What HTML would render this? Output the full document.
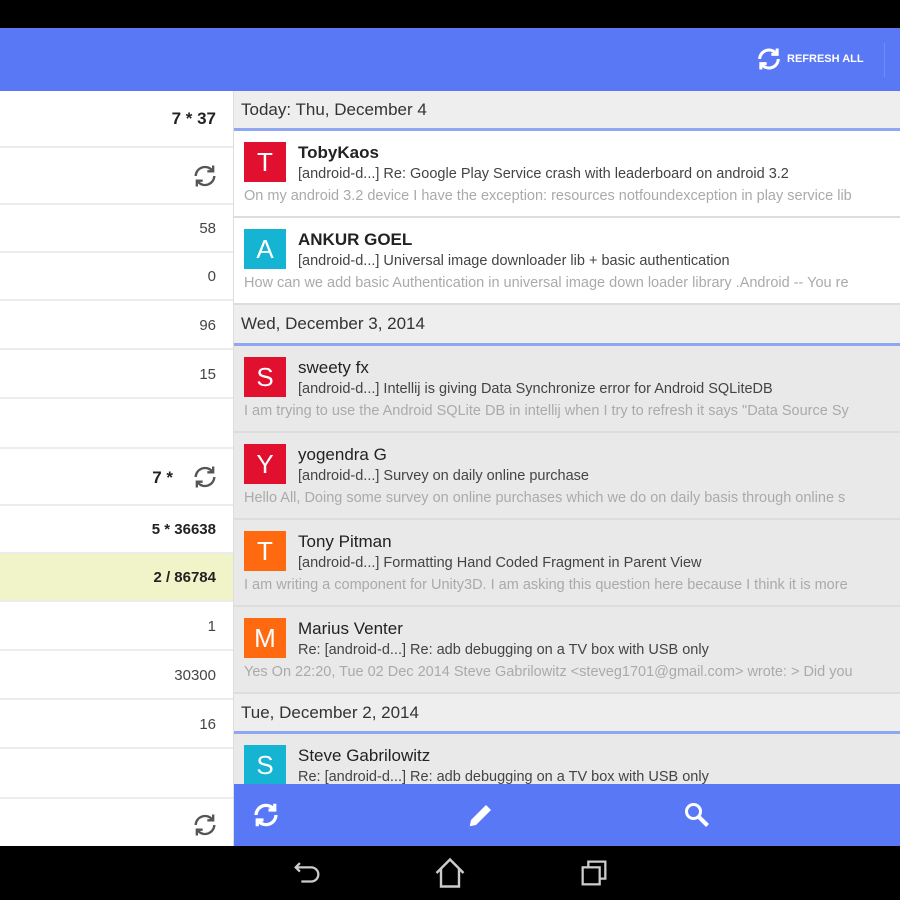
<!DOCTYPE html><html><head><style>
body{margin:0;width:900px;height:900px;overflow:hidden;background:#000;font-family:"Liberation Sans",sans-serif;position:relative}
.a{position:absolute}
.top{left:0;top:28px;width:900px;height:63px;background:#5878f5}
.left{left:0;top:91px;width:234px;height:755px;background:#fff;border-right:1px solid #ddd;box-sizing:border-box}
.lr{position:absolute;left:0;width:233px;border-bottom:2px solid #ececec;text-align:right;box-sizing:border-box;padding-right:17px;font-size:15px;color:#444}
.right{left:234px;top:91px;width:666px;height:693px;background:#e9e9e9;overflow:hidden}
.hd{position:absolute;left:0;width:666px;background:#eee;border-bottom:3px solid #8fa7f2;box-sizing:border-box;font-size:17px;color:#333;padding-left:7px}
.it{position:absolute;left:0;width:666px;border-bottom:2px solid #ddd;box-sizing:border-box;white-space:nowrap}
.av{position:absolute;left:10px;top:11px;width:42px;height:40px;color:#fff;font-size:26px;text-align:center;line-height:40px}
.n{position:absolute;left:64px;top:12px;font-size:17px;color:#222}
.s{position:absolute;left:64px;top:35px;font-size:14.5px;color:#444}
.p{position:absolute;left:10px;top:57px;font-size:14.5px;color:#aaa}
.bot{left:234px;top:784px;width:666px;height:62px;background:#5878f5}
</style></head><body>
<div class="a top">
<svg class="a" style="left:755px;top:17px" width="28" height="28" viewBox="0 0 24 24" fill="none" stroke="#fff" stroke-width="2.6"><path d="M4 12a8 8 0 0 1 14-5"/><path d="M19 3v5h-5"/><path d="M20 12a8 8 0 0 1-14 5"/><path d="M5 21v-5h5"/></svg>
<div class="a" style="left:787px;top:25px;color:#fff;font-size:11px;font-weight:bold">REFRESH ALL</div>
<div class="a" style="left:884px;top:15px;width:1px;height:34px;background:#6e8cf6"></div>
</div>
<div class="a left">
<div class="lr" style="top:0;height:57px;line-height:56px;font-weight:bold;color:#222;font-size:17px">7 * 37</div>
<div class="lr" style="top:57px;height:57px"></div>
<div class="lr" style="top:114px;height:48px;line-height:48px">58</div>
<div class="lr" style="top:162px;height:48px;line-height:48px">0</div>
<div class="lr" style="top:210px;height:49px;line-height:49px">96</div>
<div class="lr" style="top:259px;height:49px;line-height:49px">15</div>
<div class="lr" style="top:308px;height:50px"></div>
<div class="lr" style="top:358px;height:57px;line-height:57px;font-weight:bold;color:#222;font-size:17px;padding-right:60px">7 *</div>
<div class="lr" style="top:415px;height:48px;line-height:48px;font-weight:bold;color:#222">5 * 36638</div>
<div class="lr" style="top:463px;height:48px;line-height:48px;font-weight:bold;color:#222;background:#f1f4c9">2 / 86784</div>
<div class="lr" style="top:511px;height:49px;line-height:49px">1</div>
<div class="lr" style="top:560px;height:49px;line-height:49px">30300</div>
<div class="lr" style="top:609px;height:49px;line-height:49px">16</div>
<div class="lr" style="top:658px;height:50px"></div>
<svg class="a" style="left:191px;top:71px" width="28" height="28" viewBox="0 0 24 24" fill="none" stroke="#555" stroke-width="2"><path d="M4 12a8 8 0 0 1 14-5"/><path d="M19 3v5h-5"/><path d="M20 12a8 8 0 0 1-14 5"/><path d="M5 21v-5h5"/></svg>
<svg class="a" style="left:191px;top:372px" width="28" height="28" viewBox="0 0 24 24" fill="none" stroke="#555" stroke-width="2"><path d="M4 12a8 8 0 0 1 14-5"/><path d="M19 3v5h-5"/><path d="M20 12a8 8 0 0 1-14 5"/><path d="M5 21v-5h5"/></svg>
<svg class="a" style="left:191px;top:720px" width="28" height="28" viewBox="0 0 24 24" fill="none" stroke="#555" stroke-width="2"><path d="M4 12a8 8 0 0 1 14-5"/><path d="M19 3v5h-5"/><path d="M20 12a8 8 0 0 1-14 5"/><path d="M5 21v-5h5"/></svg>
</div>
<div class="a right">
<div class="hd" style="top:0;height:40px;line-height:38px">Today: Thu, December 4</div>
<div class="it" style="top:40px;height:87px;background:#fff"><div class="av" style="background:#e0102e">T</div><div class="n" style="font-weight:bold">TobyKaos</div><div class="s">[android-d...] Re: Google Play Service crash with leaderboard on android 3.2</div><div class="p">On my android 3.2 device I have the exception: resources notfoundexception in play service lib</div></div>
<div class="it" style="top:127px;height:87px;background:#fff"><div class="av" style="background:#14b4d2">A</div><div class="n" style="font-weight:bold">ANKUR GOEL</div><div class="s">[android-d...] Universal image downloader lib + basic authentication</div><div class="p">How can we add basic Authentication in universal image down loader library .Android -- You re</div></div>
<div class="hd" style="top:214px;height:41px;line-height:38px">Wed, December 3, 2014</div>
<div class="it" style="top:255px;height:87px"><div class="av" style="background:#e0102e">S</div><div class="n">sweety fx</div><div class="s">[android-d...] Intellij is giving Data Synchronize error for Android SQLiteDB</div><div class="p">I am trying to use the Android SQLite DB in intellij when I try to refresh it says "Data Source Sy</div></div>
<div class="it" style="top:342px;height:87px"><div class="av" style="background:#e0102e">Y</div><div class="n">yogendra G</div><div class="s">[android-d...] Survey on daily online purchase</div><div class="p">Hello All, Doing some survey on online purchases which we do on daily basis through online s</div></div>
<div class="it" style="top:429px;height:87px"><div class="av" style="background:#ff6a10">T</div><div class="n">Tony Pitman</div><div class="s">[android-d...] Formatting Hand Coded Fragment in Parent View</div><div class="p">I am writing a component for Unity3D. I am asking this question here because I think it is more</div></div>
<div class="it" style="top:516px;height:87px"><div class="av" style="background:#ff6a10">M</div><div class="n">Marius Venter</div><div class="s">Re: [android-d...] Re: adb debugging on a TV box with USB only</div><div class="p">Yes On 22:20, Tue 02 Dec 2014 Steve Gabrilowitz &lt;steveg1701@gmail.com&gt; wrote: &gt; Did you</div></div>
<div class="hd" style="top:603px;height:40px;line-height:38px">Tue, December 2, 2014</div>
<div class="it" style="top:643px;height:87px"><div class="av" style="background:#14b4d2">S</div><div class="n">Steve Gabrilowitz</div><div class="s">Re: [android-d...] Re: adb debugging on a TV box with USB only</div></div>
</div>
<div class="a bot">
<svg class="a" style="left:17px;top:16px" width="30" height="30" viewBox="0 0 24 24" fill="none" stroke="#fff" stroke-width="2.6"><path d="M4 12a8 8 0 0 1 14-5"/><path d="M19 3v5h-5"/><path d="M20 12a8 8 0 0 1-14 5"/><path d="M5 21v-5h5"/></svg>
<svg class="a" style="left:232px;top:16px" width="30" height="30" viewBox="0 0 24 24" fill="#fff"><path d="M3 21l1-5L16 4l4 4L8 20z"/></svg>
<svg class="a" style="left:449px;top:17px" width="28" height="28" viewBox="0 0 24 24" fill="none" stroke="#fff" stroke-width="2.6"><circle cx="9" cy="9" r="6"/><path d="M13 13l8 8" stroke-width="3.5"/></svg>
</div>
<svg class="a" style="left:290px;top:856px" width="34" height="34" viewBox="0 0 24 24" fill="none" stroke="#ccc" stroke-width="1.6"><path d="M4 8h11a5 5 0 0 1 0 10H8"/><path d="M7 5L4 8l3 3"/></svg>
<svg class="a" style="left:432px;top:855px" width="36" height="36" viewBox="0 0 24 24" fill="none" stroke="#ccc" stroke-width="1.6"><path d="M3 12L12 3l9 9"/><path d="M6 9v12h12V9"/></svg>
<svg class="a" style="left:577px;top:856px" width="34" height="34" viewBox="0 0 24 24" fill="none" stroke="#ccc" stroke-width="1.6"><rect x="4" y="8" width="12" height="12"/><path d="M8 8V4h12v12h-4"/></svg>
</body></html>
